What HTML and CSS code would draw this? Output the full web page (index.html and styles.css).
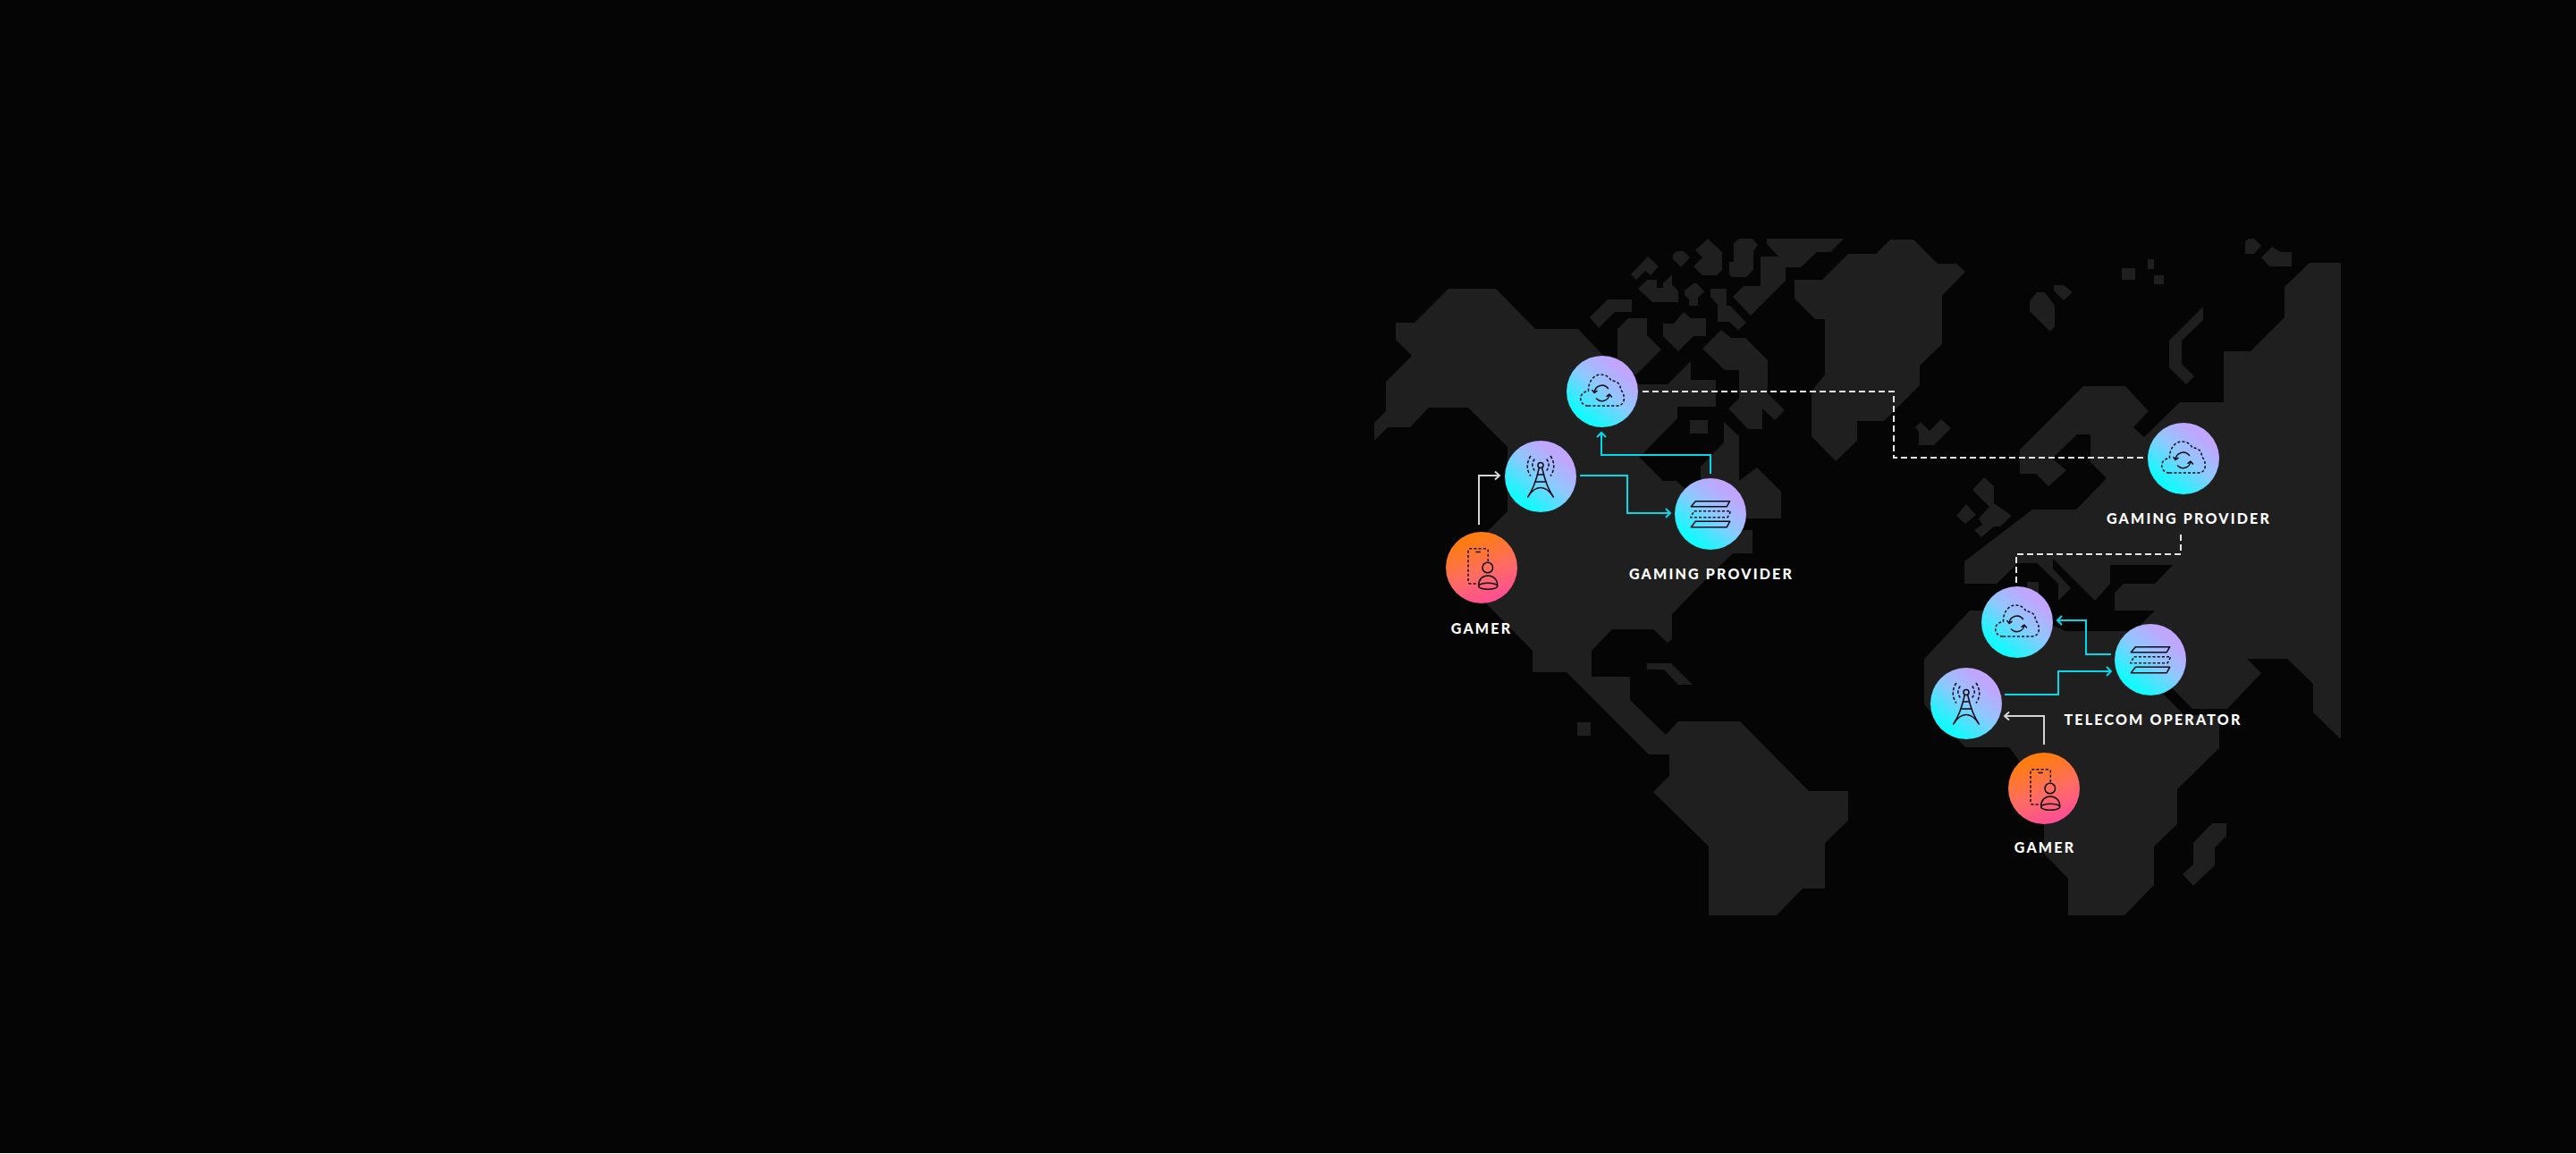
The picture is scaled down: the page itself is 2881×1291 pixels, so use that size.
FILE: index.html
```html
<!DOCTYPE html>
<html lang="en">
<head>
<meta charset="utf-8">
<title>Gaming network map</title>
<link rel="stylesheet" href="styles.css">
</head>
<body>
<main class="stage">
  <svg class="canvas" viewBox="0 0 2881 1290" aria-hidden="true">
    <defs>
      <symbol id="i-cloud" viewBox="0 0 80 80">
        <path class="dash" d="M24 56C18.500 56 15.700 51.500 15.700 48C15.700 43 19.500 40 24.500 39.500C24 30 30 21 38 21C44 21 48 24 50 28C57 28 60.500 32 60.500 38C63 40 64.500 44 64.300 49C63.800 53 61 56 57 56Z"/>
        <path d="M31.200 41A8.500 8.500 0 0 1 46.500 36.500M48 43.500A8.500 8.500 0 0 1 33.500 48M28.800 38.500L31.200 41.500L34 39.300M50.500 46L47.900 43L45 45.300"/>
      </symbol>
      <symbol id="i-tower" viewBox="0 0 80 80">
        <circle cx="40" cy="27.500" r="3"/>
        <path d="M38.300 30.500C36 41 32 54 25.700 63M41.700 30.500C44 41 48 54 54.300 63M25.700 63C30 56 35 52.500 40 52.500C45 52.500 50 56 54.300 63M36.200 38H43.800M33.800 46H46.200"/>
        <path class="dash-fine" d="M29 17C24 24 24 33 29 39.500M33.300 20.500C30 25 30 29 33.300 33.500M51 17C56 24 56 33 51 39.500M46.700 20.500C50 25 50 29 46.700 33.500"/>
      </symbol>
      <symbol id="i-stack" viewBox="0 0 80 80">
        <path d="M23.300 25.700H61.700L58.300 31.700H18.300Z"/>
        <path class="dash" d="M21.700 36.700H62.700L59.300 43.700H17.700Z"/>
        <path d="M23.300 48.300H61.700L58.300 54.700H18.300Z"/>
      </symbol>
      <symbol id="i-gamer" viewBox="0 0 80 80">
        <path class="dash" d="M47.300 33V20.700A2 2 0 0 0 45.300 18.700H27A2 2 0 0 0 25 20.700V56A2 2 0 0 0 27 58H36"/>
        <path d="M34 22.400H38.300"/>
        <circle cx="46.800" cy="40" r="5.800"/>
        <path d="M36.700 60C36.700 53 41 49 47 49C53 49 57.700 53 57.700 60"/>
        <ellipse cx="47.200" cy="60.800" rx="10.500" ry="3.500"/>
      </symbol>
    </defs>

    <g class="land">
      <!-- North and South America -->
      <path d="M1620 323H1673L1717 368H1765L1800 405L1832 430H1865L1891 404V425H1919V455H1876V468L1837 508L1833 511L1860 538H1875L1900 562L1902 535V522L1928 495V472L1945 488V538L1965 523L1992 550V580H1950L1945 593H1960V619H1938L1908 648L1870 687V715L1865 719L1849 704H1803L1780 728V757H1823V783L1863 822L1877 807H1946L2023 885H2067V918L2041 943V994H2016L1987 1024H1911V947L1849 886L1867 868V844H1844L1752 752H1714V728L1660 673L1640 640L1660 598L1686 572V500L1642 456H1598L1577 478H1552L1537 493V473L1550 460V427L1579 398L1561 380V361H1582Z"/>
      <path d="M1809 368L1821 356H1842V375L1858 391L1830 419L1809 420Z"/>
      <!-- Arctic islands -->
      <path d="M1778 355L1798 335H1825V349H1806L1788 367Z"/>
      <path d="M1824 307L1843 287L1855 298L1846 308L1840 303L1830 313Z"/>
      <path d="M1832 323L1842 313H1853V322H1860V317L1870 307V318L1877 326V338H1848Z"/>
      <path d="M1871 285L1875 281H1883L1890 288L1880 299L1871 290Z"/>
      <path d="M1896 280L1910 267L1926 282V302L1920 308H1904L1894 298L1904 288Z"/>
      <path d="M1939 272L1945 267H1960L1966 274L1961 281V302L1953 310H1937L1934 307V293H1939Z"/>
      <path d="M1976 267H2062L2047 282H2032L2014 299H1997V314L1958 353L1938 332L1950 320H1969V287H1989L1976 273Z"/>
      <path d="M1884 325L1894 317H1898L1906 326L1899 333V342H1889V335L1884 330Z"/>
      <path d="M1913 323H1931V342H1935L1953 361L1944 369L1934 360H1921V341L1913 332Z"/>
      <path d="M1860 362H1872L1883 349L1891 356H1908V376H1894L1877 393L1860 376Z"/>
      <path d="M1904 390L1925 369L1936 378H1952L1977 403V440L1996 459L1985 470L1971 457V480H1955L1933 457L1945 446V414H1929Z"/>
      <path d="M1890 470H1910V485H1890Z"/>
      <!-- Greenland and Iceland -->
      <path d="M2007 313H2038L2067 284H2098L2114 268H2140L2167 295H2188L2198 304L2172 331V385L2147 409V431L2107 471H2077V493L2053 516L2026 488V438L2041 419V357H2030L2007 334Z"/>
      <path d="M2142 478L2148 472L2158 482L2171 469L2182 479L2163 498H2146V483Z"/>
      <!-- Northern islands -->
      <path d="M2270 337L2278 327H2287L2298 342V365L2293 371L2270 348Z"/>
      <path d="M2297 319H2308L2318 327L2308 336L2297 325Z"/>
      <path d="M2373 300H2388V313H2373Z"/>
      <path d="M2402 290H2409V301H2402Z"/>
      <path d="M2409 308H2420V318H2409Z"/>
      <path d="M2511 270L2515 267H2521L2529 275L2521 284H2511Z"/>
      <path d="M2529 288L2541 276L2551 282H2563V298H2538Z"/>
      <path d="M2464 343V358L2440 381V407L2454 421L2445 430L2426 411V381Z"/>
      <!-- Eurasia -->
      <path d="M2487 393H2517L2555 355V321L2583 294H2618V827L2587 797V765L2558 737H2513L2529 753L2491 793H2452L2405 745L2393 700L2410 683H2365V663L2375 653H2410L2430 632H2360V653L2343 672L2296 625V636L2316 658L2302 672V653L2278 630H2257L2233 653H2197V628L2273 570H2322L2356 535L2338 517V486H2323L2295 513L2311 526L2291 544L2277 530H2259V503L2330 432H2377L2403 460L2386 478L2398 489L2438 450H2487Z"/>
      <!-- British Isles -->
      <path d="M2206 548L2219 534L2230 544V563L2250 577L2237 589H2230L2216 601L2208 593L2217 587L2213 580L2225 567Z"/>
      <path d="M2188 577L2199 564L2210 576L2198 586Z"/>
      <path d="M2267 651H2280V670H2267Z"/>
      <!-- Africa and Madagascar -->
      <path d="M2203 683H2260L2310 706H2390L2410 767L2443 800H2482V837L2435 883V922L2409 947V990L2376 1024H2313V983L2286 955V880L2263 857L2247 836H2198L2152 788V737Z"/>
      <path d="M2453 943L2474 921H2490V935L2477 948V968L2453 991L2441 978L2453 967Z"/>
      <!-- Small islands -->
      <path d="M1842 742H1869L1893 766H1877L1861 749H1842Z"/>
      <path d="M1764 808H1779V823H1764Z"/>
    </g>

    <g class="link">
      <path class="white" d="M1654 587V532H1677M1672 527.500L1677 532L1672 536.500"/>
      <path class="white" d="M2286 833V801H2242M2247 796.500L2242 801L2247 805.500"/>
      <path class="cyan" d="M1767 532H1820V574H1868M1863 569L1868 574L1863 579"/>
      <path class="cyan" d="M1913 530V509H1791V484M1786 489L1791 484L1796 489"/>
      <path class="cyan" d="M2361 732H2333V694H2301M2306 689L2301 694L2306 699"/>
      <path class="cyan" d="M2242 777H2302V751H2361M2356 746L2361 751L2356 756"/>
      <path class="dashed" d="M1837 438H2118V512H2397"/>
      <path class="dashed" d="M2439 598V620H2255V652"/>
    </g>
  </svg>

  <div class="node cool n-cloud-a"><svg class="icon"><use href="#i-cloud"/></svg></div>
  <div class="node cool n-tower-a"><svg class="icon"><use href="#i-tower"/></svg></div>
  <div class="node cool n-stack-a"><svg class="icon"><use href="#i-stack"/></svg></div>
  <div class="node warm n-gamer-a"><svg class="icon"><use href="#i-gamer"/></svg></div>
  <div class="node cool n-cloud-b"><svg class="icon"><use href="#i-cloud"/></svg></div>
  <div class="node cool n-cloud-c"><svg class="icon"><use href="#i-cloud"/></svg></div>
  <div class="node cool n-stack-b"><svg class="icon"><use href="#i-stack"/></svg></div>
  <div class="node cool n-tower-b"><svg class="icon"><use href="#i-tower"/></svg></div>
  <div class="node warm n-gamer-b"><svg class="icon"><use href="#i-gamer"/></svg></div>

  <span class="label l-gamer-a">GAMER</span>
  <span class="label l-provider-a">GAMING PROVIDER</span>
  <span class="label l-provider-b">GAMING PROVIDER</span>
  <span class="label l-telecom">TELECOM OPERATOR</span>
  <span class="label l-gamer-b">GAMER</span>
</main>
</body>
</html>
```
FILE: styles.css
```css
html {
  background: #ffffff;
}

body {
  margin: 0;
}

.stage {
  position: relative;
  height: 1290px;
  overflow: hidden;
  background: #050505;
  font-family: "Lato", "Liberation Sans", sans-serif;
}

.canvas {
  position: absolute;
  left: 0;
  top: 0;
  width: 2881px;
  height: 1290px;
}

.land {
  fill: #1f1f1f;
}

.link {
  fill: none;
  stroke-width: 2;
}

.white {
  stroke: #d4d4d4;
}

.cyan {
  stroke: #00dae8;
}

.dashed {
  stroke: #e6e6e6;
  stroke-dasharray: 7 4;
}

.node {
  position: absolute;
  width: 80px;
  height: 80px;
  border-radius: 50%;
}

.cool {
  background: linear-gradient(38deg, #14f9ff 20%, #8fc8ff 52%, #c0a6ff 78%);
}

.warm {
  background: linear-gradient(160deg, #ff7c12 18%, #ff6c62 55%, #ff4b9c 92%);
}

.icon {
  display: block;
  width: 80px;
  height: 80px;
  fill: none;
  stroke: #0b0b12;
  stroke-width: 1.5;
  stroke-linejoin: round;
  stroke-linecap: round;
}

.dash {
  stroke-dasharray: 3 2.2;
  stroke-linecap: butt;
}

.dash-fine {
  stroke-dasharray: 3.500 2;
  stroke-linecap: butt;
}

.n-cloud-a { left: 1752px; top: 398px; }
.n-tower-a { left: 1683px; top: 493px; }
.n-stack-a { left: 1873px; top: 535px; }
.n-gamer-a { left: 1617px; top: 595px; }
.n-cloud-b { left: 2402px; top: 473px; }
.n-cloud-c { left: 2216px; top: 656px; }
.n-stack-b { left: 2365px; top: 698px; }
.n-tower-b { left: 2159px; top: 747px; }
.n-gamer-b { left: 2246px; top: 842px; }

.label {
  position: absolute;
  transform: translate(-50%, -50%);
  color: #ffffff;
  font-size: 16px;
  font-weight: 900;
  line-height: 20px;
  letter-spacing: 2.2px;
  white-space: nowrap;
}

.l-gamer-a { left: 1657px; top: 703px; }
.l-provider-a { left: 1914px; top: 642px; }
.l-provider-b { left: 2448px; top: 580px; }
.l-telecom { left: 2408px; top: 805px; }
.l-gamer-b { left: 2287px; top: 948px; }
```
